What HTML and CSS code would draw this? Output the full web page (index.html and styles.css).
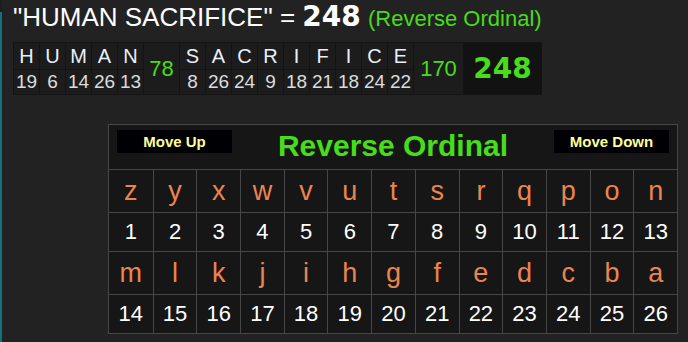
FILE: index.html
```html
<!DOCTYPE html>
<html>
<head>
<meta charset="utf-8">
<title>Reverse Ordinal</title>
<link rel="stylesheet" href="styles.css">
</head>
<body>
<div class="page">
  <div class="edge"></div>
  <main class="main">
    <div class="headline">"HUMAN SACRIFICE" = <b class="total">248</b> <span class="cipher-name">(Reverse Ordinal)</span></div>
    <table class="breakdown">
      <tr>
        <td class="ltr">H</td><td class="ltr">U</td><td class="ltr">M</td><td class="ltr">A</td><td class="ltr">N</td>
        <td class="sum" rowspan="2">78</td>
        <td class="ltr">S</td><td class="ltr">A</td><td class="ltr">C</td><td class="ltr">R</td><td class="ltr">I</td><td class="ltr">F</td><td class="ltr">I</td><td class="ltr">C</td><td class="ltr">E</td>
        <td class="sum wide" rowspan="2">170</td>
        <td class="grand" rowspan="2">248</td>
      </tr>
      <tr>
        <td class="num">19</td><td class="num">6</td><td class="num">14</td><td class="num">26</td><td class="num">13</td>
        <td class="num">8</td><td class="num">26</td><td class="num">24</td><td class="num">9</td><td class="num">18</td><td class="num">21</td><td class="num">18</td><td class="num">24</td><td class="num">22</td>
      </tr>
    </table>
    <section class="chart">
      <div class="chart-head">
        <button class="move">Move Up</button>
        <h2 class="chart-title">Reverse Ordinal</h2>
        <button class="move">Move Down</button>
      </div>
      <div class="grid">
        <div class="cell letter">z</div><div class="cell letter">y</div><div class="cell letter">x</div><div class="cell letter">w</div><div class="cell letter">v</div><div class="cell letter">u</div><div class="cell letter">t</div><div class="cell letter">s</div><div class="cell letter">r</div><div class="cell letter">q</div><div class="cell letter">p</div><div class="cell letter">o</div><div class="cell letter">n</div>
        <div class="cell value">1</div><div class="cell value">2</div><div class="cell value">3</div><div class="cell value">4</div><div class="cell value">5</div><div class="cell value">6</div><div class="cell value">7</div><div class="cell value">8</div><div class="cell value">9</div><div class="cell value">10</div><div class="cell value">11</div><div class="cell value">12</div><div class="cell value">13</div>
        <div class="cell letter">m</div><div class="cell letter">l</div><div class="cell letter">k</div><div class="cell letter">j</div><div class="cell letter">i</div><div class="cell letter">h</div><div class="cell letter">g</div><div class="cell letter">f</div><div class="cell letter">e</div><div class="cell letter">d</div><div class="cell letter">c</div><div class="cell letter">b</div><div class="cell letter">a</div>
        <div class="cell value last">14</div><div class="cell value last">15</div><div class="cell value last">16</div><div class="cell value last">17</div><div class="cell value last">18</div><div class="cell value last">19</div><div class="cell value last">20</div><div class="cell value last">21</div><div class="cell value last">22</div><div class="cell value last">23</div><div class="cell value last">24</div><div class="cell value last">25</div><div class="cell value last">26</div>
      </div>
    </section>
  </main>
</div>
</body>
</html>
```
FILE: styles.css
```css
* { box-sizing: border-box; }

html, body {
  margin: 0;
  padding: 0;
  background: #222222;
  font-family: "Liberation Sans", Arial, sans-serif;
  color: #ffffff;
}

.page {
  display: flex;
  width: 688px;
  height: 342px;
  overflow: hidden;
}

.edge {
  width: 2px;
  flex: none;
  background: linear-gradient(to bottom, #1d1d1d 0, #1d1d1d 12px, #127080 12px, #16707e 100%);
}

.main {
  flex: 1;
  padding-left: 11px;
}

.headline {
  padding-top: 3px;
  font-size: 26px;
  line-height: 27px;
  white-space: nowrap;
  color: #ffffff;
}

.total {
  font-family: "DejaVu Sans", sans-serif;
  font-weight: bold;
  font-size: 28px;
}

.cipher-name {
  font-size: 22px;
  color: #47dc1c;
}

.breakdown {
  margin-top: 10px;
  border-collapse: separate;
  border-spacing: 1px;
  background: #141414;
}

.breakdown td {
  padding: 0;
  text-align: center;
  background: #1c1c1c;
}

.ltr {
  width: 25px;
  height: 26px;
  font-size: 20px;
  line-height: 26px;
  color: #e8f0fb;
}

.num {
  height: 24px;
  font-size: 19px;
  line-height: 24px;
  color: #dcdcdc;
}

.sum {
  width: 35px;
  font-size: 22px;
  color: #47dc1c;
  vertical-align: middle;
}

.sum.wide {
  width: 49px;
}

.grand {
  width: 77px;
  background: #121212 !important;
  font-family: "DejaVu Sans", sans-serif;
  font-weight: bold;
  font-size: 28px;
  color: #47dc1c;
  vertical-align: middle;
}

.chart {
  margin-top: 29px;
  margin-left: 95px;
  width: 570px;
  border: 1px solid #464646;
  background: #161616;
}

.chart-head {
  display: flex;
  align-items: flex-start;
  height: 45px;
  padding: 0 8px;
  border-bottom: 1px solid #464646;
}

.move {
  width: 115px;
  height: 23px;
  margin-top: 5px;
  padding: 0;
  border: none;
  background: #000004;
  color: #ffff99;
  font-family: "Liberation Sans", Arial, sans-serif;
  font-weight: bold;
  font-size: 15px;
  flex: none;
}

.chart-title {
  flex: 1;
  margin: 3px 0 0;
  text-align: center;
  font-size: 30px;
  line-height: 36px;
  font-weight: bold;
  color: #47dc1c;
}

.grid {
  display: grid;
  grid-template-columns: repeat(13, 1fr);
}

.cell {
  display: flex;
  align-items: center;
  justify-content: center;
  border-left: 1px solid #464646;
  border-bottom: 1px solid #464646;
}

.cell:nth-child(13n + 1) {
  border-left: none;
}

.cell.last {
  border-bottom: none;
}

.letter {
  height: 43px;
  font-size: 27px;
  color: #ec8450;
}

.value {
  height: 39px;
  font-size: 22px;
  color: #ffffff;
}

.value.last {
  height: 38px;
}
```
